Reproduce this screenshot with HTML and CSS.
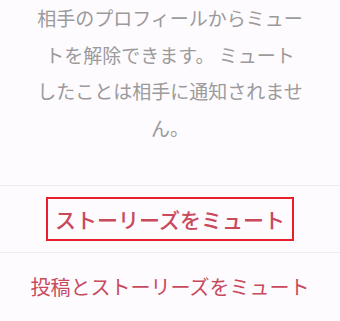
FILE: index.html
```html
<!DOCTYPE html>
<html lang="ja">
<head>
  <meta charset="UTF-8" />
  <meta name="viewport" content="width=device-width, initial-scale=1.0"/>
  <title>ミュート</title>
  <link rel="stylesheet" href="styles.css">
</head>
<body>
  <div class="sheet">
    <p class="note">相手のプロフィールからミュートを解除できます。 ミュートしたことは相手に通知されません。</p>
    <div class="option option-stories">
      <span class="highlight">ストーリーズをミュート</span>
    </div>
    <div class="option option-all">投稿とストーリーズをミュート</div>
  </div>
</body>
</html>
```

FILE: styles.css
```css
body {
  margin: 0;
  background-color: #fdfbfd;
  font-family: "Noto Sans CJK JP", "Noto Sans", sans-serif;
}

.sheet {
  display: flex;
  flex-direction: column;
}

.note {
  margin: 0 auto;
  padding-bottom: 38px;
  width: 268px;
  color: #9b9a9c;
  font-size: 19px;
  line-height: 36.7px;
  text-align: center;
}

.option {
  border-top: 1px solid #efebef;
  display: flex;
  justify-content: center;
  align-items: center;
  color: #c9495d;
}

.option-stories {
  height: 66px;
}

.option-all {
  height: 68px;
  font-size: 20px;
}

.highlight {
  border: 2px solid #e8202c;
  padding: 0 7px;
  font-size: 21px;
  font-weight: 500;
  line-height: 40px;
}
```
